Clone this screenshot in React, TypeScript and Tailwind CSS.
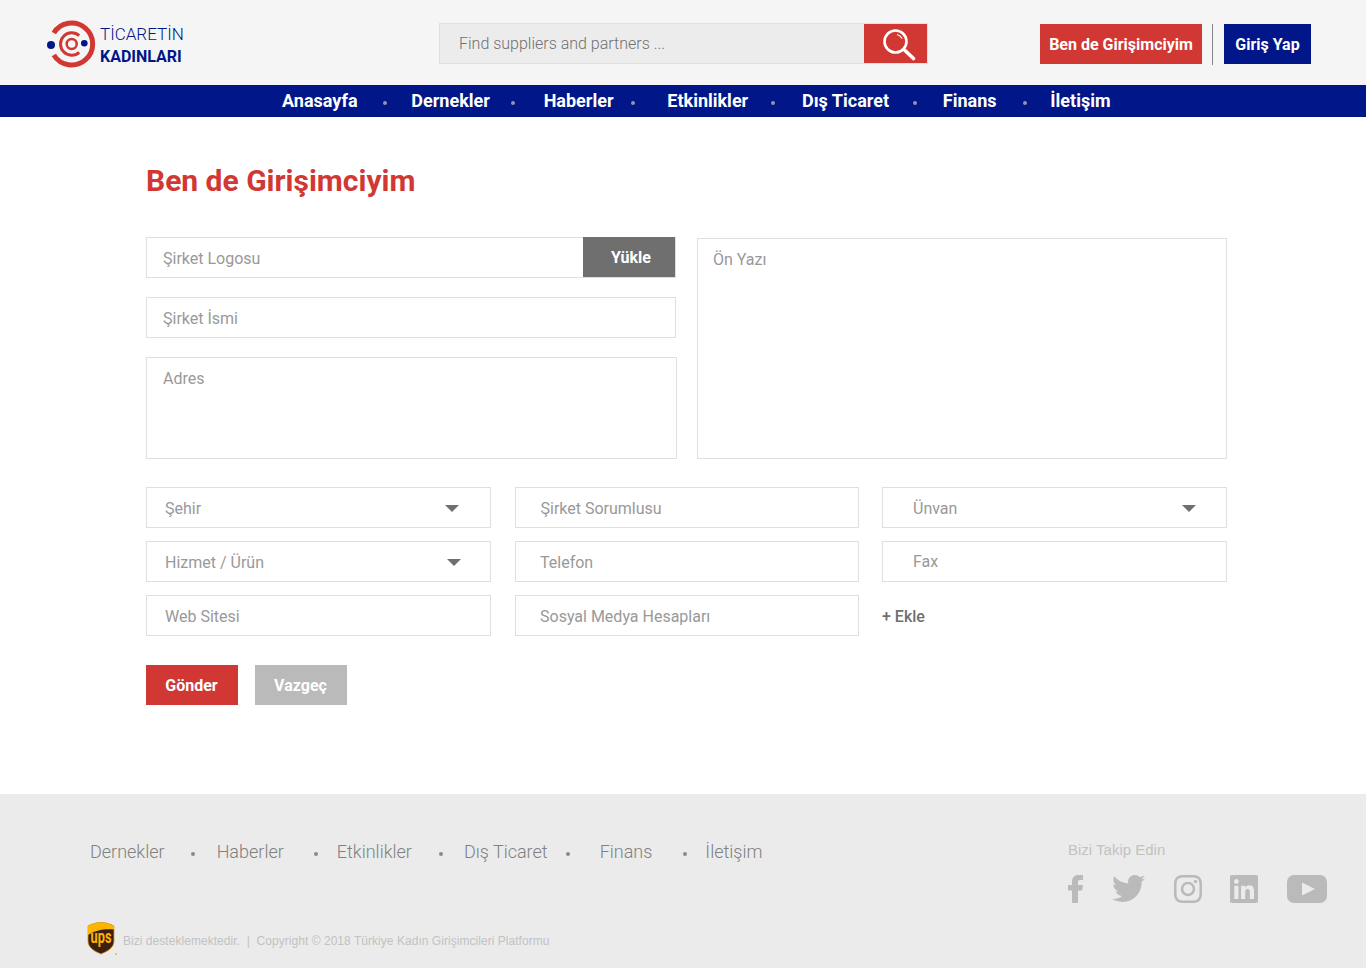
import React from "react";
import { FaInstagram, FaLinkedin, FaTwitter } from "react-icons/fa";

// dot sits unevenly between items in the design, so each one carries its own margins
const navItems = [
  { label: "Anasayfa", dot: "ml-[25px] mr-[24.8px]" },
  { label: "Dernekler", dot: "ml-[21px] mr-[28.8px]" },
  { label: "Haberler", dot: "ml-[17px] mr-[32.8px]" },
  { label: "Etkinlikler", dot: "ml-[23px] mr-[26.8px]" },
  { label: "Dış Ticaret", dot: "ml-[24px] mr-[25.8px]" },
  { label: "Finans", dot: "ml-[26px] mr-[23.8px]" },
  { label: "İletişim", dot: "" },
];

const footerLinks = [
  { label: "Dernekler", dot: "ml-[26px] mr-[22px]" },
  { label: "Haberler", dot: "ml-[30px] mr-[19px]" },
  { label: "Etkinlikler", dot: "ml-[27px] mr-[21px]" },
  { label: "Dış Ticaret", dot: "ml-[18px] mr-[30px]" },
  { label: "Finans", dot: "ml-[31px] mr-[18px]" },
  { label: "İletişim", dot: "" },
];

function Logo() {
  return (
    <svg width="54" height="54" viewBox="0 0 54 54" className="shrink-0">
      <path d="M8.8 16 A21 21 0 1 1 8.8 38" fill="none" stroke="#d13833" strokeWidth="5" />
      <path d="M34.2 18.7 A11.2 11.2 0 1 0 34.2 35.3" fill="none" stroke="#d13833" strokeWidth="3" />
      <circle cx="26.7" cy="27" r="5" fill="none" stroke="#d13833" strokeWidth="2.5" />
      <circle cx="6" cy="28" r="4" fill="#001689" />
      <circle cx="39.3" cy="26.3" r="3.3" fill="#001689" />
    </svg>
  );
}

function SearchIcon() {
  return (
    <svg width="40" height="40" viewBox="0 0 40 40">
      <circle cx="19.5" cy="17.5" r="11" fill="none" stroke="#fff" strokeWidth="2.6" />
      <path d="M29 26.5 L37.5 34.5" stroke="#fff" strokeWidth="3.6" strokeLinecap="round" />
      <path d="M21 10.5 A7.5 7.5 0 0 1 26 14.5" fill="none" stroke="#fff" strokeWidth="1.2" />
    </svg>
  );
}

function Caret({ className = "" }: { className?: string }) {
  return <span className={`h-0 w-0 border-x-[7px] border-t-[7px] border-x-transparent border-t-[#6f6f6f] ${className}`} />;
}

function Field({ label, className = "", caret }: { label: string; className?: string; caret?: boolean }) {
  return (
    <div className={`flex h-[41px] items-center justify-between border border-[#dfdfdf] bg-white text-base text-[#999] ${className}`}>
      <span>{label}</span>
      {caret && <Caret />}
    </div>
  );
}

function UpsLogo() {
  return (
    <svg width="32" height="34" viewBox="0 0 32 34" className="shrink-0">
      <path d="M1 4 C6 1.2 11 0.5 14 0.5 C17 0.5 22 1.2 27 4 L27 19 C27 26 20 29.5 14 32 C8 29.5 1 26 1 19 Z" fill="#3b1f12" stroke="#d99a1c" strokeWidth="0.8" />
      <path d="M1 4 C6 1.2 11 0.5 14 0.5 C17 0.5 22 1.2 27 4 L27 7.5 C18 6.5 8 8 1 13 Z" fill="#ffb500" />
      <text transform="translate(14 21) scale(0.85 1.25)" textAnchor="middle" fill="#ffb500" fontSize="15" fontWeight="700" fontFamily="Roboto, sans-serif">ups</text>
      <circle cx="29" cy="32" r="1" fill="#e3b04a" />
    </svg>
  );
}

function FacebookF() {
  return (
    <svg width="15" height="28" viewBox="0 0 15 28" fill="currentColor">
      <path d="M4 28 L4 15.5 L0 15.5 L0 10 L4 10 L4 7 C4 2.5 6.5 0 10.5 0 L15 0 L15 5 L12 5 C10.5 5 10 5.8 10 7.2 L10 10 L15 10 L14.2 15.5 L10 15.5 L10 28 Z" />
    </svg>
  );
}

function YoutubeRect() {
  return (
    <svg width="40" height="28" viewBox="0 0 40 28" fill="currentColor">
      <path fillRule="evenodd" d="M7 0 H33 A7 7 0 0 1 40 7 V21 A7 7 0 0 1 33 28 H7 A7 7 0 0 1 0 21 V7 A7 7 0 0 1 7 0 Z M15 7.5 V20.5 L28 14 Z" />
    </svg>
  );
}

export default function App() {
  return (
    <div className="min-h-[968px] bg-white font-['Roboto',sans-serif]">
      {/* Header */}
      <header className="flex h-[85px] items-start bg-[#f5f5f5]">
        <div className="mt-[17px] ml-[45px] flex w-[394px] items-center gap-[1px]">
          <Logo />
          <div className="pt-[2px] text-[#001689]">
            <div className="text-[17px] leading-[24px] font-light">TİCARETİN</div>
            <div className="text-[16px] leading-[22px] font-bold">KADINLARI</div>
          </div>
        </div>
        <div className="mt-[23px] flex h-[41px] w-[489px] items-stretch border border-[#e0e0e0] bg-[#ececec]">
          <div className="flex flex-1 items-center pl-[19px] text-base font-light text-[#707070]">Find suppliers and partners ...</div>
          <button className="flex w-[63px] items-center justify-center bg-[#d13833]">
            <SearchIcon />
          </button>
        </div>
        <div className="mt-[24px] ml-[112px] flex items-start">
          <button className="h-10 w-[162px] bg-[#d13833] pt-[2px] text-base font-bold text-white">Ben de Girişimciyim</button>
          <div className="mx-[10px] h-[41px] w-px bg-[#888]" />
          <button className="ml-[1px] h-10 w-[87px] bg-[#001689] pt-[2px] text-base font-bold text-white">Giriş Yap</button>
        </div>
      </header>

      {/* Nav */}
      <nav className="flex h-8 items-center bg-[#001689] pl-[282px] text-lg font-bold text-white">
        {navItems.map((item) => (
          <React.Fragment key={item.label}>
            <span>{item.label}</span>
            {item.dot && <span className={`mt-[3px] h-1 w-1 rounded-full bg-[#8c93b8] ${item.dot}`} />}
          </React.Fragment>
        ))}
      </nav>

      {/* Form */}
      <main className="h-[677px] pl-[146px]">
        <h1 className="pt-[44px] text-[30px] leading-[40px] font-bold text-[#d13833]">Ben de Girişimciyim</h1>

        <div className="mt-[36px] flex items-start">
          <div className="w-[531px]">
            <div className="flex h-[41px] w-[530px] border border-[#dfdfdf]">
              <div className="flex flex-1 items-center pt-[2px] pl-4 text-base text-[#999]">Şirket Logosu</div>
              <button className="-mt-px w-[92px] bg-[#6f6f6f] pt-[2px] pl-[4px] text-base font-bold text-white">Yükle</button>
            </div>
            <Field label="Şirket İsmi" className="mt-[19px] w-[530px] pt-[2px] pl-4" />
            <div className="mt-[19px] h-[102px] border border-[#dfdfdf] px-4 pt-[9px] text-base text-[#999]">Adres</div>
          </div>
          <div className="mt-px ml-[20px] h-[221px] w-[530px] border border-[#dfdfdf] px-[15px] pt-[9px] text-base text-[#999]">Ön Yazı</div>
        </div>

        <div className="mt-[28px] grid w-[1081px] grid-cols-[345px_344px_345px] gap-x-[23.5px] gap-y-[13px]">
          <Field label="Şehir" className="pt-[2px] pr-[31px] pl-[18px]" caret />
          <Field label="Şirket Sorumlusu" className="pt-[2px] pl-[25px]" />
          <Field label="Ünvan" className="pt-[2px] pr-[30px] pl-[30px]" caret />
          <Field label="Hizmet / Ürün" className="pt-[2px] pr-[29px] pl-[18px]" caret />
          <Field label="Telefon" className="pt-[2px] pl-[24.5px]" />
          <Field label="Fax" className="pl-[30px]" />
          <Field label="Web Sitesi" className="pt-[2px] pl-[18px]" />
          <Field label="Sosyal Medya Hesapları" className="pt-[2px] pl-[24.5px]" />
          <div className="flex h-[41px] items-center pt-[2px] text-base font-medium text-[#6f6f6f]">+ Ekle</div>
        </div>

        <div className="mt-[29px] flex gap-[17px]">
          <button className="h-10 w-[92px] bg-[#d13833] pt-[2px] pr-[1px] text-base font-bold text-white">Gönder</button>
          <button className="h-10 w-[92px] bg-[#bababa] pt-[2px] pr-[1px] text-base font-bold text-white">Vazgeç</button>
        </div>
      </main>

      {/* Footer */}
      <footer className="relative h-[174px] bg-[#ebebeb] pl-[90px]">
        <div className="flex items-start justify-between pt-[46px] pr-[39px]">
          <div className="flex items-start text-lg leading-[24px] font-light text-[#808080]">
            {footerLinks.map((link) => (
              <React.Fragment key={link.label}>
                <span>{link.label}</span>
                {link.dot && <span className={`mt-[12px] h-1 w-1 rounded-full bg-[#8a8a8a] ${link.dot}`} />}
              </React.Fragment>
            ))}
          </div>
          <div className="w-[259px]">
            <div className="font-['Liberation_Sans',sans-serif] text-[15px] leading-[20px] text-[#c2c2c2]">Bizi Takip Edin</div>
            <div className="mt-[12px] flex h-[33px] items-center text-[#bababa]">
              <FacebookF />
              <FaTwitter className="ml-[29px] h-[33px] w-[33px]" />
              <FaInstagram className="ml-[29px] h-[32px] w-[28px]" />
              <FaLinkedin className="ml-[28px] h-[32px] w-[28px]" />
              <div className="ml-[29px]">
                <YoutubeRect />
              </div>
            </div>
          </div>
        </div>
        <div className="absolute top-[128px] left-[87px] flex items-center gap-[4px] font-['Liberation_Sans',sans-serif] text-xs tracking-[0.04px] text-[#c2c2c2]">
          <UpsLogo />
          <span className="mt-[4px]">Bizi desteklemektedir.&nbsp; |&nbsp; Copyright © 2018 Türkiye Kadın Girişimcileri Platformu</span>
        </div>
      </footer>
    </div>
  );
}
